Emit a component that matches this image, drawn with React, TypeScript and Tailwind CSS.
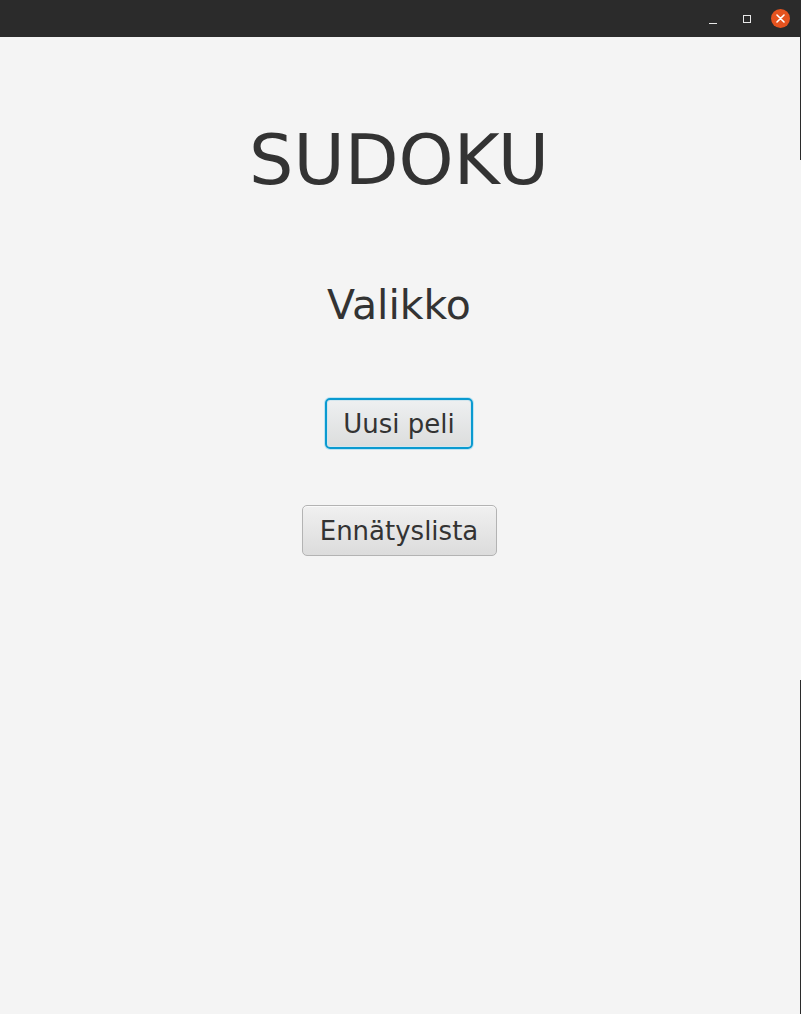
import React from 'react';

const font = { fontFamily: '"DejaVu Sans", Verdana, sans-serif' };

const FxButton: React.FC<{ label: string; focused?: boolean; width: string }> = ({ label, focused, width }) => (
  <button
    type="button"
    className={
      focused
        ? `h-[51px] ${width} rounded-[5px] border-2 border-[#0a9ad0] bg-gradient-to-b from-[#eef0f1] to-[#dcdddd] shadow-[0_0_0_1px_#bfe4f3,inset_0_0_0_1px_#d2e6ee] flex items-center justify-center text-[26px] leading-none text-[#333333]`
        : `h-[51px] ${width} rounded-[5px] border border-[#b3b3b3] bg-gradient-to-b from-[#f0f0f0] to-[#dcdcdc] shadow-[inset_0_1px_0_#fafafa] flex items-center justify-center text-[26px] leading-none text-[#333333]`
    }
  >
    {label}
  </button>
);

export default function App() {
  return (
    <div className="flex w-[801px] h-[1014px] bg-[#f4f4f4]" style={font}>
      <div className="flex flex-col w-[800px]">
        {/* window title bar */}
        <div className="h-[37px] bg-[#2b2b2b] flex items-center justify-end pr-[10px] shrink-0">
          <div className="w-[20px] h-[20px] flex items-end justify-center pb-[5px] mr-[14px]">
            <div className="w-[8px] h-[1px] bg-[#e8e8e8]" />
          </div>
          <div className="w-[20px] h-[20px] flex items-center justify-center mr-[14px]">
            <div className="w-[8px] h-[8px] border border-[#e8e8e8]" />
          </div>
          <div className="w-[19px] h-[19px] rounded-full bg-[#e5531f] flex items-center justify-center">
            <svg width="9" height="9" viewBox="0 0 9 9">
              <path d="M1 1 L8 8 M8 1 L1 8" stroke="#ffffff" strokeWidth="1.6" strokeLinecap="round" />
            </svg>
          </div>
        </div>

        <div className="flex flex-col items-center text-[#333333] pr-[2px]">
          <h1 className="mt-[88px] text-[70px] leading-none font-normal">SUDOKU</h1>
          <h2 className="mt-[90px] text-[41px] leading-none font-normal">Valikko</h2>
          <div className="mt-[72px]">
            <FxButton label="Uusi peli" focused width="w-[148px]" />
          </div>
          <div className="mt-[56px]">
            <FxButton label="Ennätyslista" width="w-[195px]" />
          </div>
        </div>
      </div>

      {/* 1px strip at the right edge */}
      <div className="flex flex-col w-[1px]">
        <div className="h-[160px] bg-[#2b2b2b]" />
        <div className="h-[520px] bg-[#f4f4f4]" />
        <div className="flex-1 bg-[#2b2b2b]" />
      </div>
    </div>
  );
}
